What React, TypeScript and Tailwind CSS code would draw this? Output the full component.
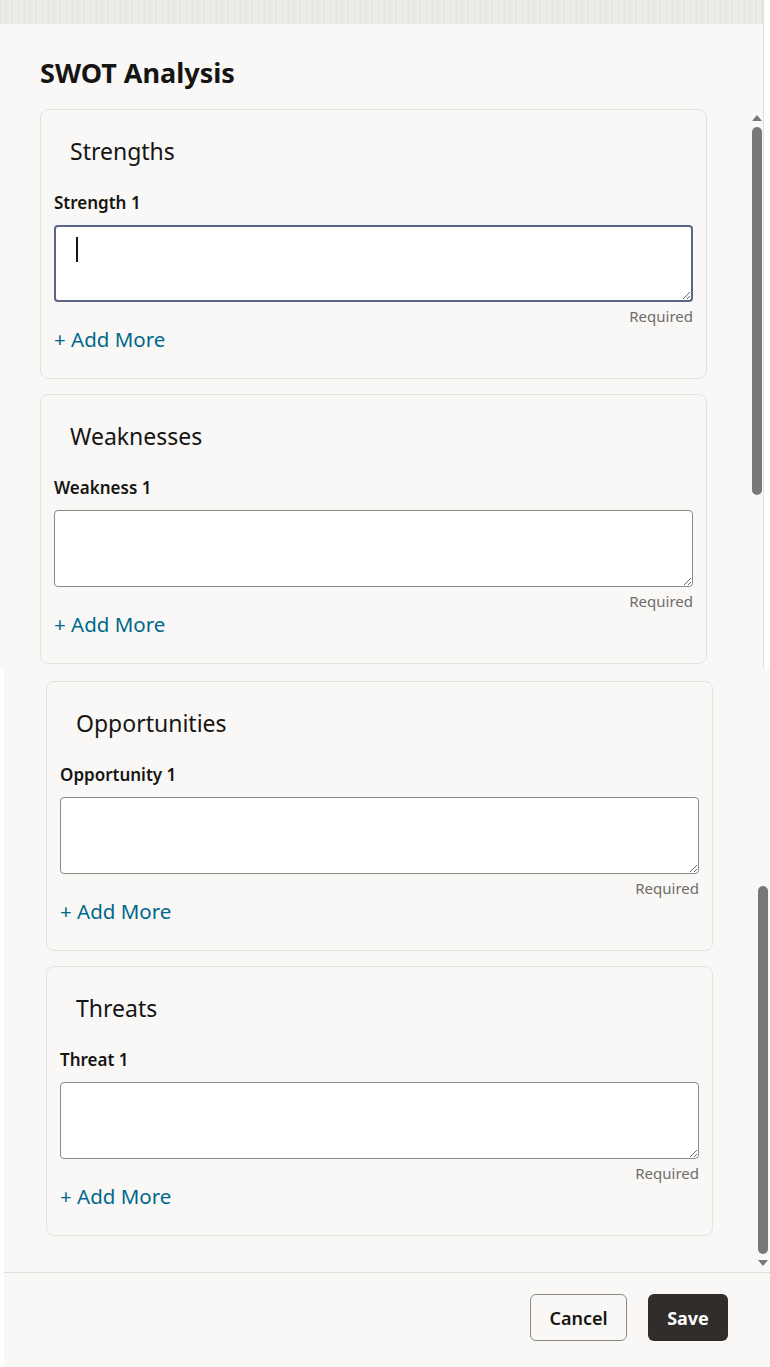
import type { ReactNode } from "react";

type SectionProps = {
  title: string;
  label: string;
  focused?: boolean;
};

function SwotCard({ title, label, focused }: SectionProps) {
  return (
    <div className="flex w-[667px] flex-col rounded-lg border border-[#e5e3e0] px-[13px] pt-[27px] pb-[27px]">
      <h2 className="pl-4 text-[23px] leading-7 text-[#161513]">{title}</h2>
      <label className="mt-[26px] text-[17px] leading-6 font-semibold text-[#161513]">{label}</label>
      <div className="relative mt-[10px]">
        <textarea
          readOnly
          className={
            focused
              ? "block h-[77px] w-full rounded-[4px] border-2 border-[#5b6587] bg-white px-5 py-2 outline-none"
              : "block h-[77px] w-full rounded-[4px] border border-[#8d8a86] bg-white px-5 py-2 outline-none"
          }
        />
        {focused && <span className="absolute top-3 left-[22px] h-[25px] w-[2px] bg-[#161513]" />}
      </div>
      <p className="mt-[4px] text-right text-[15px] leading-5 text-[#6f6c67]">Required</p>
      <button className="mt-[1px] self-start text-[20.5px] leading-6 text-[#00688c]">+ Add More</button>
    </div>
  );
}

function Scrollbar({ children }: { children: ReactNode }) {
  return <div className="flex w-[10px] flex-col items-center">{children}</div>;
}

function ArrowUp() {
  return <div className="h-0 w-0 border-x-[5px] border-b-[6px] border-x-transparent border-b-[#787878]" />;
}

function ArrowDown() {
  return <div className="h-0 w-0 border-x-[5px] border-t-[6px] border-x-transparent border-t-[#787878]" />;
}

export default function App() {
  return (
    <div className="h-[1367px] w-[770px] overflow-hidden bg-white font-['Noto_Sans',sans-serif] text-[#161513]">
      {/* upper part */}
      <div className="flex h-[669px]">
        <div className="flex w-[764px] flex-col border-r border-[#e4e2df] bg-[#f9f8f6]">
          <div className="h-6 bg-[repeating-linear-gradient(90deg,#e1e0dd_0px,#f0efed_2px,#e5e4e1_3px,#f3f2f0_4px,#e2e1de_6px)]" />
          <div className="flex flex-1">
            <div className="flex flex-col pl-10">
              <h1 className="mt-[33px] text-[27px] leading-8 font-bold">SWOT Analysis</h1>
              <div className="mt-[20px] flex flex-col gap-[15px]">
                <SwotCard title="Strengths" label="Strength 1" focused />
                <SwotCard title="Weaknesses" label="Weakness 1" />
              </div>
            </div>
            <div className="ml-auto mr-[1px]">
              <Scrollbar>
                <div className="mt-[91px]">
                  <ArrowUp />
                </div>
                <div className="mt-[6px] h-[368px] w-[10px] rounded-full bg-[#787878]" />
              </Scrollbar>
            </div>
          </div>
        </div>
      </div>

      {/* lower part */}
      <div className="flex h-[698px]">
        <div className="w-1 bg-white" />
        <div className="flex flex-1 flex-col bg-[#f9f8f6]">
          <div className="flex flex-1">
            <div className="flex flex-col gap-[15px] pt-3 pl-[42px]">
              <SwotCard title="Opportunities" label="Opportunity 1" />
              <SwotCard title="Threats" label="Threat 1" />
            </div>
            <div className="ml-auto mr-[2px] flex flex-col justify-end pb-[6px]">
              <Scrollbar>
                <div className="h-[368px] w-[10px] rounded-full bg-[#787878]" />
                <div className="mt-[6px]">
                  <ArrowDown />
                </div>
              </Scrollbar>
            </div>
          </div>
          <div className="flex h-[95px] justify-end gap-[21px] border-t border-[#dfddda] pt-[21px] pr-[42px]">
            <button className="h-[47px] w-[97px] rounded-md border border-[#8d8a86] bg-transparent text-lg font-semibold">
              Cancel
            </button>
            <button className="h-[47px] w-[80px] rounded-md bg-[#312d2a] text-lg font-bold text-white">Save</button>
          </div>
        </div>
      </div>
    </div>
  );
}
